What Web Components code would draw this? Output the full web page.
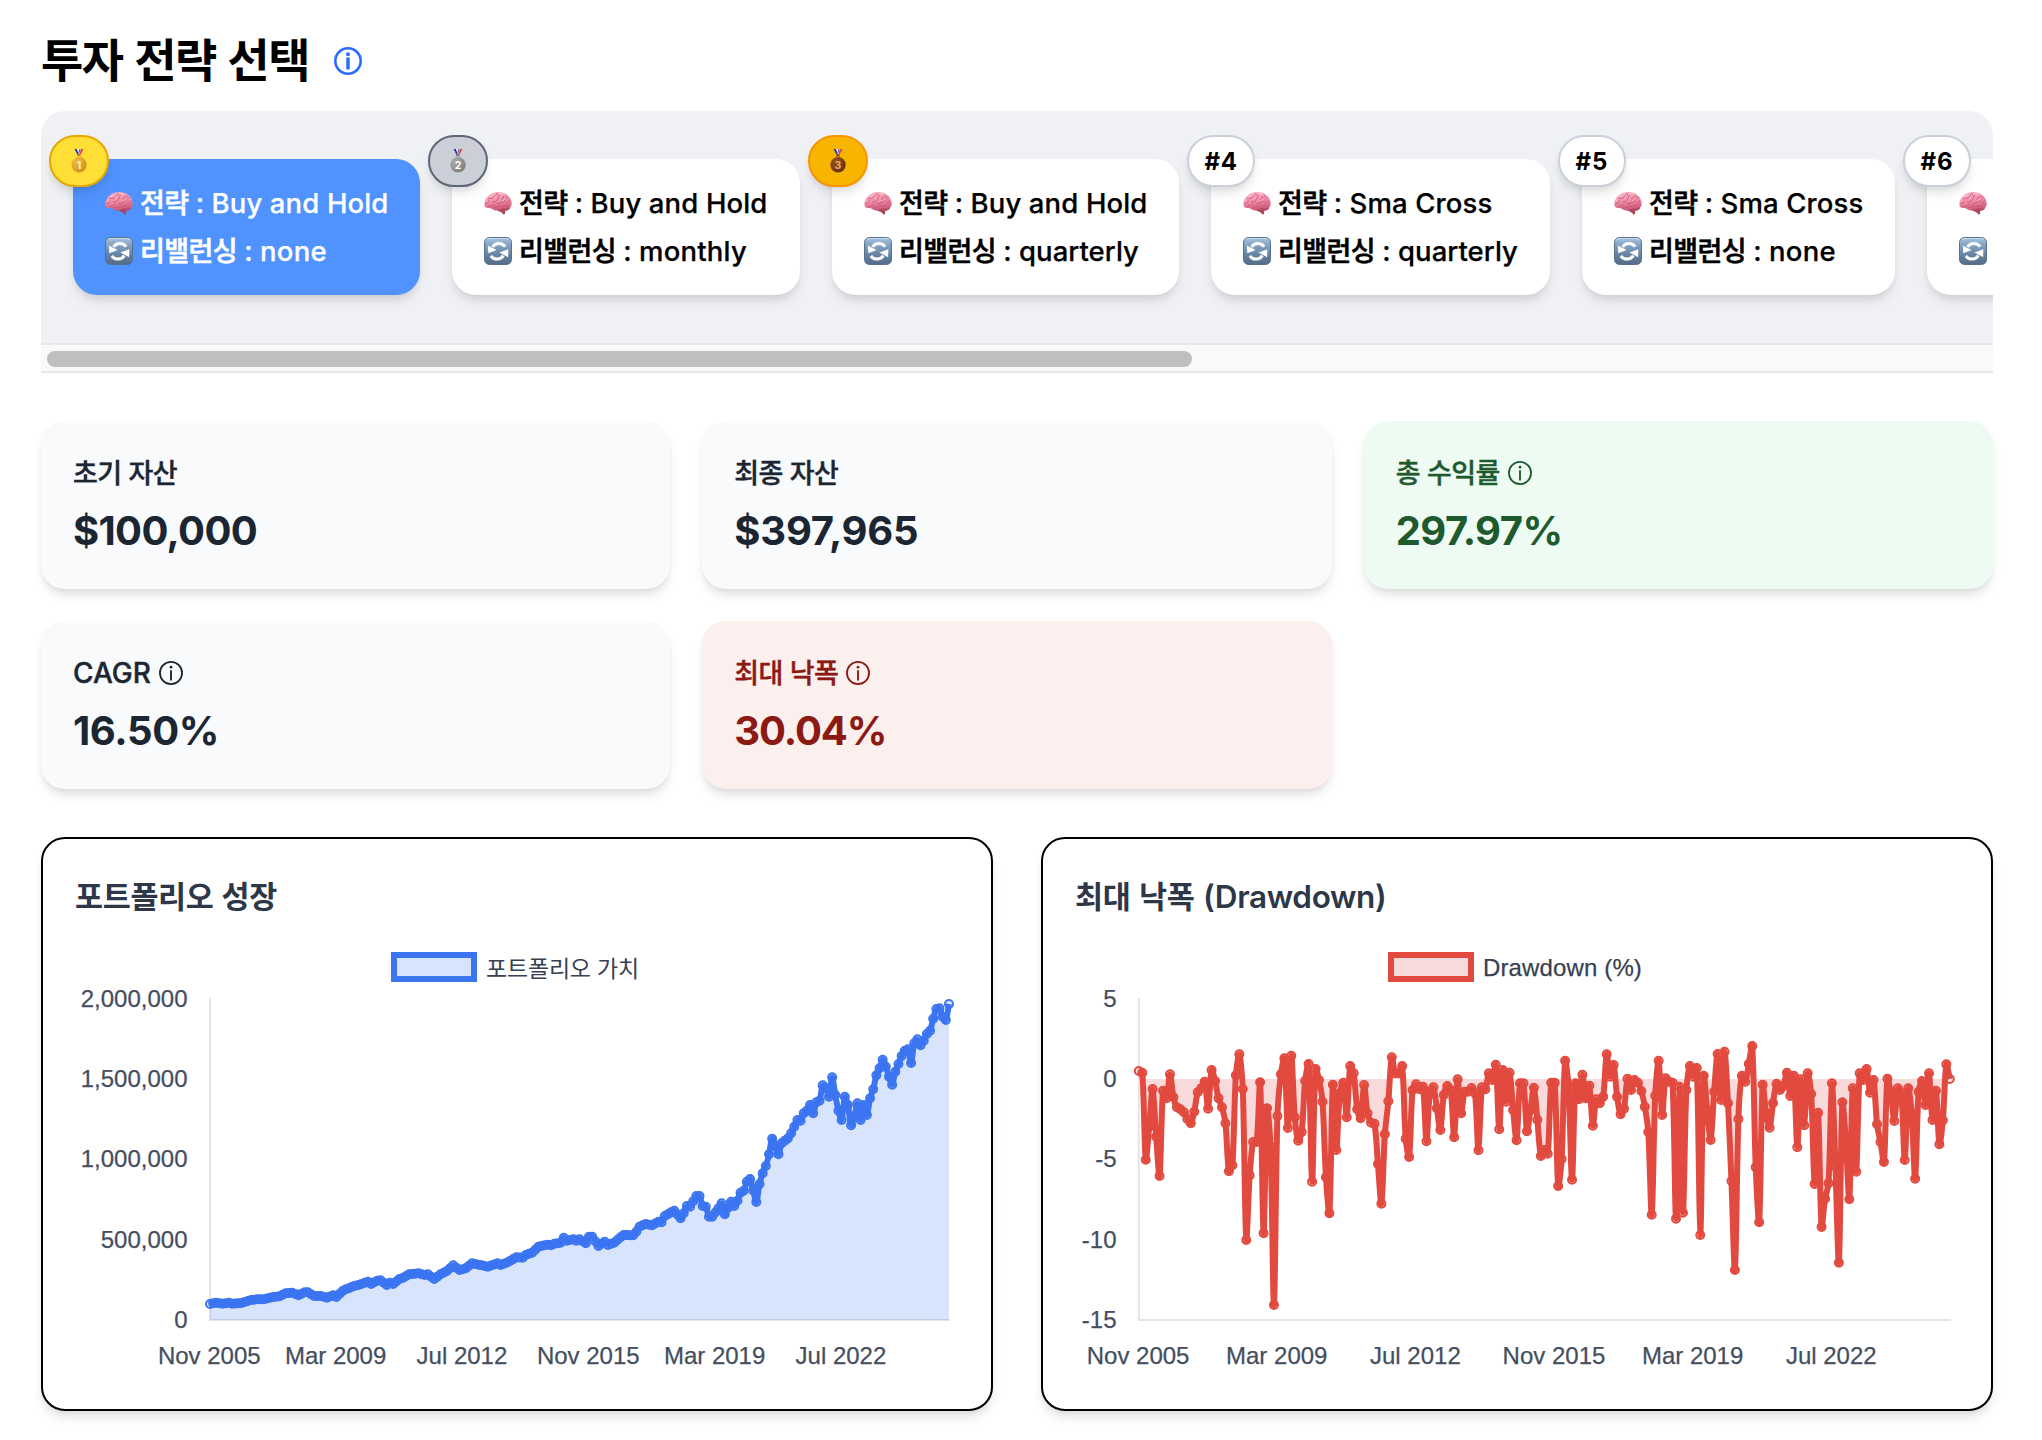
<!DOCTYPE html>
<html lang="ko">
<head>
<meta charset="utf-8">
<title>투자 전략 선택</title>
<style>
html,body{margin:0;background:#fff}
body{font-family:Inter,"Noto Sans CJK KR",sans-serif;color:#000;width:2042px;height:1440px;overflow:hidden}
</style>
</head>
<body>
<backtest-page></backtest-page>
<script>
const define=(name,render,after)=>customElements.define(name,class extends HTMLElement{
  connectedCallback(){
    if(this.shadowRoot)return;
    this.attachShadow({mode:'open'}).innerHTML=render(this);
    if(after)after(this);
  }
});

/* A run of text tracked to an exact advance width. */
define('fit-run',()=>`<style>
:host{display:inline-block;white-space:pre}
:host([ko]){font-family:"Noto Sans CJK KR",sans-serif}
span{white-space:pre}
</style><span><slot></slot></span>`,el=>{
  const w=+el.getAttribute('w');
  if(!w)return;
  const nat=el.shadowRoot.querySelector('span').getBoundingClientRect().width;
  el.style.letterSpacing=((w-nat)/el.textContent.length)+'px';
  el.style.width=w+'px';
});

define('info-icon',el=>{
  const bold=el.hasAttribute('bold');
  return `<style>:host{display:block}svg{display:block}</style>
  <svg width="${bold?28:24}" height="${bold?28:24}" viewBox="0 0 28 28" fill="none" stroke="currentColor">
  <circle cx="14" cy="14" r="${bold?12.7:12.9}" stroke-width="${bold?2.6:2.1}"/>
  <circle cx="14" cy="7.2" r="${bold?2:1.6}" fill="currentColor" stroke="none"/>
  <path d="M14 ${bold?10.5:10.8}V${bold?22.5:22.8}" stroke-width="${bold?3.4:2.2}"/></svg>`;
});

define('brain-icon',()=>`<style>:host{display:block;white-space:normal}svg{display:block}</style>
<svg width="28" height="28" viewBox="0 0 28 28">
<defs><linearGradient id="g" x1="0" y1="0" x2=".25" y2="1"><stop offset="0" stop-color="#fbb6c6"/><stop offset=".55" stop-color="#f08fa8"/><stop offset="1" stop-color="#cf5a7b"/></linearGradient></defs>
<path d="M15 18.500l5.400 1.600c.8 1.600 1 3.200.7 4.600l-1.400 1.100c-1.400-2.400-4-3.600-6.700-4.400z" fill="#a44a58"/>
<path d="M16.500 20.300c2.500 2 6.500 2.200 8.600.2 1.200-1.200 1.400-2.800.9-4.100l-8.500.8z" fill="#b34a63"/>
<path d="M.5 16.200C-.2 12.600 2 8.600 5 6.300 8.200 3.600 12.600 2.600 16.600 3.200 21 3.500 25 6.400 26.700 10.200c1.200 2.600 1.400 5.300.2 7.300-1.500 1.900-4 2.200-6.200 1.900-1.800-.2-3.400.200-4.800 1.200-2 1.400-5 1.300-7-.1-1.600-1.100-3.200-1.500-5-1.500-1.800.1-3.100-1-3.400-2.800z" fill="url(#g)"/>
<g fill="none" stroke="#c9587a" stroke-width=".9" stroke-linecap="round">
<path d="M2 14.500c1.500-.3 2.800-1 3.300-2.600M4.500 9.500c1.600-.6 3 .2 4.400-.4 1.200-.6 1.300-2 2.500-2.800M8.500 12.800c2 .6 3.700-.4 4.700-1.900 1-1.400.8-3 2.300-4.300M4.500 17.200c2.200.5 4.200-.4 5.300-2M9.500 18.200c2.700.5 4.600-.8 7-.9 2.400 0 3.500-1.100 6-.7M13.300 14.800c2.200.300 3.600-.9 5-1.900 1.300-.9 2.800-.6 3.600-2M17.500 9.900c1.700.200 2.600-1.100 2.100-2.700M22.700 13.800c1.300 0 2.300-.8 2.500-2M21.500 6.700c.2 1.400 1.200 2.300 2.600 2.300M12.500 4.300c-.1 1 .5 1.600 1.500 1.700"/></g>
<g fill="none" stroke="#ffd6de" stroke-width=".8" stroke-linecap="round" opacity=".8">
<path d="M5.200 7.900c.9-.8 2-1.400 3.100-1.800M16 4.800c1.300 0 2.400.4 3.200.9M10.500 9.800c.6-.4.9-1 1.200-1.600M2.100 12.500c.2-.7.6-1.300 1-1.800M18.500 11.600c.8-.3 1.500-.7 2-1.300"/></g>
</svg>`);

define('cycle-icon',()=>`<style>:host{display:block;white-space:normal}svg{display:block}</style>
<svg width="28" height="28" viewBox="0 0 28 28">
<defs><linearGradient id="g" x1="0" y1="0" x2="0" y2="1"><stop offset="0" stop-color="#a9c6e0"/><stop offset=".25" stop-color="#86a6c6"/><stop offset=".7" stop-color="#617f9f"/><stop offset="1" stop-color="#546b86"/></linearGradient></defs>
<rect x=".5" y=".5" width="27" height="27" rx="5" fill="url(#g)" stroke="#57708d"/>
<path d="M2.500 2.600Q4 1.500 6 1.500H22Q24 1.500 25.500 2.600" fill="none" stroke="#cfe3f2" stroke-width="1" opacity=".8"/>
<g fill="none" stroke="#fff" stroke-width="3"><path d="M8.600 9.900C11.500 5.600 17.800 5.200 21.200 9.600"/><path d="M19.400 18.700C16.500 23 10.200 23.400 6.800 19"/></g>
<path d="M3.900 8.400L12.600 13.100 4.300 16.300zM24.100 20.200L15.400 15.500 24.400 12.300z" fill="#fff"/>
</svg>`);

define('medal-icon',el=>{
  const n=el.getAttribute('place');
  const c={1:['#f6c94c','#c98a12','#fff3c4'],2:['#b9b9b9','#757575','#fff'],3:['#a85b25','#5d2a0c','#f0a868']}[n];
  return `<style>:host{display:block}svg{display:block}text{font:700 10.500px Inter,sans-serif}</style>
<svg width="16" height="24" viewBox="0 0 16 24">
<defs><linearGradient id="g" x1="0" y1="0" x2="1" y2="1"><stop offset="0" stop-color="${c[0]}"/><stop offset="1" stop-color="${c[1]}"/></linearGradient></defs>
<path d="M3.500 0H6.200L8.700 6.500H6.900z" fill="#2b3a9c"/><path d="M6 0h1.500l1.400 4-.8 1.800z" fill="#fff"/>
<path d="M12.500 0H9.800L7.300 6.500h1.800z" fill="#e8413c"/><path d="M10 0H8.700L7.400 4l.7 1.800z" fill="#e8e6f5"/><path d="M8.600 0l.9 0-1.500 4.700-.5-.9z" fill="#33409f"/>
<circle cx="8" cy="7.400" r="1.300" fill="none" stroke="${c[1]}" stroke-width=".9"/>
<circle cx="8" cy="15.700" r="7.700" fill="url(#g)"/><circle cx="8" cy="15.700" r="6.400" fill="none" stroke="${c[1]}" stroke-width=".6" opacity=".6"/>
<text x="8" y="19.500" text-anchor="middle" fill="${c[2]}">${n}</text></svg>`;
});

define('rank-badge',el=>{
  const n=+el.getAttribute('rank');
  const c={1:['#ffde35','#e5a800'],2:['#cacfd8','#5f6577'],3:['#f8b500','#f79400']}[n]||['#fff','#cad0da'];
  return `<style>:host{position:absolute;left:-24px;top:-24px;width:${n<4?60:68}px;height:52px;box-sizing:border-box;display:flex;align-items:center;justify-content:center;
  border:2px solid ${c[1]};background:${c[0]};border-radius:26px;font-size:24px;font-weight:700;color:#000;
  box-shadow:0 8px 12px -2px rgba(0,0,0,.1),0 4px 8px -4px rgba(0,0,0,.1)}</style>
  ${n<4?`<medal-icon place="${n}"></medal-icon>`:`<fit-run w="33">#${n}</fit-run>`}`;
});

define('strategy-card',el=>{
  const a=k=>el.getAttribute(k);
  const row=(icon,label,lw,text,tw)=>`<div class="row">${icon}${text?`<div class="text"><fit-run ko w="${lw}">${label}</fit-run><fit-run w="23"> : </fit-run><fit-run w="${tw}">${text}</fit-run></div>`:''}</div>`;
  return `<style>
:host{display:block;position:relative;box-sizing:border-box;flex:none;width:${a('width')}px;height:136px;padding:20px 32px;border-radius:24px;background:#fff;color:#000;
font-size:27.500px;font-weight:500;box-shadow:0 8px 12px -2px rgba(0,0,0,.1),0 4px 8px -4px rgba(0,0,0,.1)}
:host([active]){background:#5093ff;color:#fff}
.row{display:flex;align-items:center;height:48px}
.text{display:flex;align-items:baseline;margin:-2px 0 0 7px;line-height:48px;white-space:pre}
fit-run{-webkit-text-stroke:.25px currentColor}
fit-run[ko]{font-size:27px;-webkit-text-stroke:.6px currentColor}
brain-icon,cycle-icon{flex:none}
</style>
<rank-badge rank="${a('rank')}"></rank-badge>
${row('<brain-icon></brain-icon>','전략',48.5,a('name'),a('nw'))}
${row('<cycle-icon></cycle-icon>','리밸런싱',97,a('rebalance'),a('rw'))}`;
});

define('strategy-strip',()=>`<style>
:host{display:block;overflow:hidden;border-radius:24px 24px 0 0}
.list{display:flex;gap:32px;padding:48px 32px;background:#f0f1f5;overflow:hidden}
.bar{box-sizing:border-box;height:30px;border:solid #e7e7e7;border-width:2px 0;background:#f9f9f9;padding:6px}
.thumb{width:1145px;height:16px;border-radius:8px;background:#bfbfbf}
</style><div class="list"><slot></slot></div><div class="bar"><div class="thumb"></div></div>`);

define('stat-card',el=>{
  const a=k=>el.getAttribute(k);
  return `<style>
:host{display:block;box-sizing:border-box;height:168px;padding:32px;border-radius:24px;background:#f8fafc;color:#1c2532;box-shadow:0 8px 12px -2px rgba(0,0,0,.1),0 4px 8px -4px rgba(0,0,0,.1)}
:host([tone=good]){background:#edfbf3;color:#1e5a2e}
:host([tone=bad]){background:#fcf0ee;color:#8c1a14}
.label{display:flex;align-items:center;gap:8px;height:40px;line-height:40px;font-size:28px;font-weight:500}
.label fit-run{-webkit-text-stroke:.4px currentColor}
.label fit-run[ko]{font-size:27px;margin-top:-3px}
.value{margin-top:10px;height:54px;line-height:56px;font-size:40px;font-weight:700}
</style>
<div class="label"><fit-run ${a('label')=='CAGR'?'':'ko'} w="${a('lw')}">${a('label')}</fit-run>${el.hasAttribute('info')?'<info-icon></info-icon>':''}</div>
<div class="value"><fit-run w="${a('vw')}">${a('value')}</fit-run></div>`;
});

const GROWTH=[[450,1122],[470,1118],[488,1121],[505,1118],[520,1121],[545,1119],[570,1110],[590,1108],[610,1108],[635,1101],[655,1099],[675,1090],[695,1088],[715,1096],[735,1087],[745,1087],[760,1098],[780,1098],[800,1103],[818,1096],[829,1101],[845,1083],[857,1078],[868,1075],[880,1070],[900,1065],[922,1055],[935,1062],[950,1052],[962,1051],[980,1065],[990,1058],[1000,1062],[1015,1047],[1030,1044],[1048,1033],[1075,1030],[1090,1035],[1104,1033],[1122,1047],[1140,1033],[1160,1023],[1178,1006],[1198,1020],[1215,1015],[1236,1000],[1260,1004],[1285,1010],[1310,1000],[1325,1005],[1345,998],[1370,982],[1388,983],[1400,975],[1415,968],
[1435,950],[1460,944],[1472,946],[1485,941],[1500,938],[1511,923],[1525,932],[1540,928],[1550,932],[1558,928],[1577,940],[1588,920],[1600,920],[1614,948],[1634,935],[1644,945],[1665,938],[1680,922],[1692,915],[1715,916],[1730,905],[1738,890],[1756,882],[1777,886],[1795,875],[1805,877],[1818,858],[1830,847],[1843,842],[1862,865],[1872,850],[1880,828],[1892,830],[1908,798],[1921,798],[1927,828],[1938,830],[1947,860],[1959,860],[1972,835],[1982,820],[1994,853],[2012,815],[2023,828],[2033,812],[2042,788],[2052,782],[2060,755],[2070,747],[2089,816],[2098,762],[2107,730],[2117,708],[2126,673],[2136,626],[2155,673],[2164,640],[2180,625],[2195,610],[2202,590],[2211,570],[2223,572],[2232,550],[2242,542],[2250,525],[2260,550],[2268,517],[2280,512],[2287,466],[2297,475],[2307,500],[2316,442],[2326,495],[2333,542],[2344,570],[2354,500],[2364,525],[2373,586],[2382,560],[2391,520],[2401,570],[2411,525],[2422,555],[2430,505],[2439,478],[2448,436],[2458,415],[2468,389],[2480,410],[2487,440],[2496,464],[2506,425],[2515,402],[2525,378],[2534,362],[2545,358],[2554,399],[2563,340],[2572,328],[2583,346],[2592,332],[2601,312],[2612,302],[2620,266],[2629,237],[2640,235],[2648,260],[2658,270],[2667,222]];
/* Knots land on monthly indices; the months between are interpolated. */
const growthY=(()=>{
  const out=[],k=GROWTH.map(([x,y])=>[Math.round((x-450)/9.474),930+y/3]);
  for(let j=0;j<k.length-1;j++){const[a,ya]=k[j],[b,yb]=k[j+1];for(let i=a;i<=b;i++)out[i]=b==a?yb:ya+(yb-ya)*(i-a)/(b-a);}
  return out;
})();
const D1=[633,638,899,800,687,830,948,692,715,643,712,742,748,757,777,790,755,697,685,665,746,630,663,715,742,790,934,916,646,583,687,1140,946,846,846,667,1120,745,860,1335,768,643,595,804,587,772,842,816,662,612,965,627,660,725,952,1060,674,870,700,668,772,618,640,748,775,675,760,788,791,912];
const D2=[821,613,514,382,430,430,408,626,681,480,463,478,470,634,485,472,535,600,495,468,480,622,448,550,485,485,474,490,661,472,478,430,450,404,598,420,515,428,540,631,460,460,604,540,473,569,678,660,671,458,458,768,687,392,470,749,460,508,434,505,467,587,508,520,500,373,440,405,500,553,536,446,480,450,458,483,530,606,854,497,392,555,445,455,458,866,470,848,480];
const D3=[258,290,264,765,287,390,480,335,222,360,215,370,603,870,417,287,305,252,198,562,727,314,400,443,369,311,330,318,278,348,287,502,298,436,280,342,612,398,741,656,610,310,560,848,367,480,658,325,575,280,300,267,338,300,433,486,546,296,340,423,325,340,540,325,400,596,335,303,375,280,420,332,493,421,253,297];
const drawY=[...D1.map(v=>860+v/3),...D2.map(v=>930+v/3),...D3.map(v=>980+v/3)];

const CHARTS={
  growth:{ox:75,x0:210,x1:949,base:1320,ys:growthY,color:'#3b75f1',fill:'#d8e4fb',tickX:187.500,ticks:['2,000,000','1,500,000','1,000,000','500,000','0']},
  drawdown:{ox:1075,x0:1138.800,x1:1949.800,base:1079,ys:drawY,color:'#e24a3f',fill:'#f9dada',tickX:1116.500,ticks:['5','0','-5','-10','-15']}
};
function spline(p,t){
  const n=p.length,c=p.map((q,i)=>{
    const a=p[Math.max(i-1,0)],b=p[Math.min(i+1,n-1)];
    const d1=Math.hypot(q[0]-a[0],q[1]-a[1]),d2=Math.hypot(b[0]-q[0],b[1]-q[1]),s=d1+d2||1;
    const f1=t*d1/s,f2=t*d2/s;
    return[[q[0]-f1*(b[0]-a[0]),q[1]-f1*(b[1]-a[1])],[q[0]+f2*(b[0]-a[0]),q[1]+f2*(b[1]-a[1])]];
  });
  const f=v=>v.map(z=>z.toFixed(2)).join(' ');
  let d='M'+f(p[0]);
  for(let i=1;i<n;i++)d+='C'+f(c[i-1][1])+' '+f(c[i][0])+' '+f(p[i]);
  return d;
}
define('line-chart',el=>{
  const c=CHARTS[el.getAttribute('series')];
  const step=(c.x1-c.x0)/234;
  const pts=c.ys.map((y,i)=>[c.x0+step*i,y]);
  const d=spline(pts,.3);
  const months=['Nov 2005','Mar 2009','Jul 2012','Nov 2015','Mar 2019','Jul 2022'];
  const base=[1007,1087,1167,1247.500,1327.500];
  return `<style>:host{display:block}svg{display:block}text{font:24px "Liberation Sans",sans-serif;fill:#444e5e;stroke:#444e5e;stroke-width:.25px}</style>
<svg width="884" height="392" viewBox="${c.ox} 985 884 392">
<path d="${d}L${c.x1} ${c.base}L${c.x0} ${c.base}Z" fill="${c.fill}"/>
<path d="M${c.x0} 998V1321M${c.x0-1} 1320H${c.x1+1}" stroke="rgba(0,0,0,.1)" stroke-width="2" fill="none"/>
<path d="${d}" fill="none" stroke="${c.color}" stroke-width="6" stroke-linejoin="miter" stroke-miterlimit="2"/>
<g fill="${c.color}" fill-opacity=".15" stroke="${c.color}" stroke-width="2">${pts.map(p=>`<circle cx="${p[0].toFixed(2)}" cy="${p[1].toFixed(2)}" r="4"/>`).join('')}</g>
${c.ticks.map((t,i)=>`<text x="${c.tickX}" y="${base[i]}" text-anchor="end">${t}</text>`).join('')}
${months.map((t,i)=>`<text x="${c.x0-.7+step*40*i}" y="1363.500" text-anchor="middle">${t}</text>`).join('')}
</svg>`;
});

define('chart-card',el=>{
  const c=CHARTS[el.getAttribute('series')];
  return `<style>
:host{display:block;box-sizing:border-box;width:952px;height:574px;padding:32px;border:2px solid #000;border-radius:24px;background:#fff;box-shadow:0 8px 12px -2px rgba(0,0,0,.1),0 4px 8px -4px rgba(0,0,0,.1)}
.title{height:48px;line-height:48px;font-size:32px;font-weight:600;color:#2d3748;display:flex;align-items:baseline;white-space:pre}
.legend{display:flex;align-items:center;justify-content:center;gap:9px;height:30px;margin:33px 0 3px;padding-right:4px;font-size:24px;color:#374151}
.swatch{box-sizing:border-box;width:86px;height:30px;border:6px solid ${c.color};background:${c.fill}}
</style>
<div class="title"><slot name="title"></slot></div>
<div class="legend"><div class="swatch"></div><slot name="legend"></slot></div>
<line-chart series="${el.getAttribute('series')}"></line-chart>`;
});

define('backtest-page',()=>`<style>
:host{display:block;padding:0 49px 0 41px}
header{height:111px;display:flex;align-items:center;box-sizing:border-box}
h1{margin:0;padding-top:3px;font:700 46px/64px "Noto Sans CJK KR",sans-serif}
header info-icon{color:#2b6cff;margin:11px 0 0 25px}
.stats{display:grid;grid-template-columns:repeat(3,1fr);gap:32px;margin-top:48px}
.charts{display:flex;gap:48px;margin-top:48px}
.k{font-size:30.500px;font-weight:600}
.lat{font-size:31.500px;font-weight:600}
.lk{font-size:23px;margin-top:-1px}
.ll{font-family:"Liberation Sans",sans-serif;margin-top:1px;-webkit-text-stroke:.25px currentColor}
</style>
<header><h1><fit-run ko w="268">투자 전략 선택</fit-run></h1><info-icon bold></info-icon></header>
<strategy-strip>
<strategy-card active rank="1" width="347" name="Buy and Hold" nw="177" rebalance="none" rw="67"></strategy-card>
<strategy-card rank="2" width="348" name="Buy and Hold" nw="177" rebalance="monthly" rw="108"></strategy-card>
<strategy-card rank="3" width="347" name="Buy and Hold" nw="177" rebalance="quarterly" rw="120"></strategy-card>
<strategy-card rank="4" width="339" name="Sma Cross" nw="143" rebalance="quarterly" rw="120"></strategy-card>
<strategy-card rank="5" width="313" name="Sma Cross" nw="143" rebalance="none" rw="67"></strategy-card>
<strategy-card rank="6" width="313" name="" nw="0" rebalance="" rw="0"></strategy-card>
</strategy-strip>
<section class="stats">
<stat-card label="초기 자산" lw="104" value="$100,000" vw="184"></stat-card>
<stat-card label="최종 자산" lw="104" value="$397,965" vw="184"></stat-card>
<stat-card tone="good" info label="총 수익률" lw="104" value="297.97%" vw="167"></stat-card>
<stat-card info label="CAGR" lw="78" value="16.50%" vw="146"></stat-card>
<stat-card tone="bad" info label="최대 낙폭" lw="104" value="30.04%" vw="152"></stat-card>
</section>
<section class="charts">
<chart-card series="growth"><fit-run slot="title" class="k" ko w="202">포트폴리오 성장</fit-run><fit-run slot="legend" class="lk" ko w="153">포트폴리오 가치</fit-run></chart-card>
<chart-card series="drawdown"><fit-run slot="title" class="k" ko w="128">최대 낙폭 </fit-run><fit-run slot="title" class="lat" w="183">(Drawdown)</fit-run><fit-run slot="legend" class="ll" w="159">Drawdown (%)</fit-run></chart-card>
</section>`);
</script>
</body>
</html>
